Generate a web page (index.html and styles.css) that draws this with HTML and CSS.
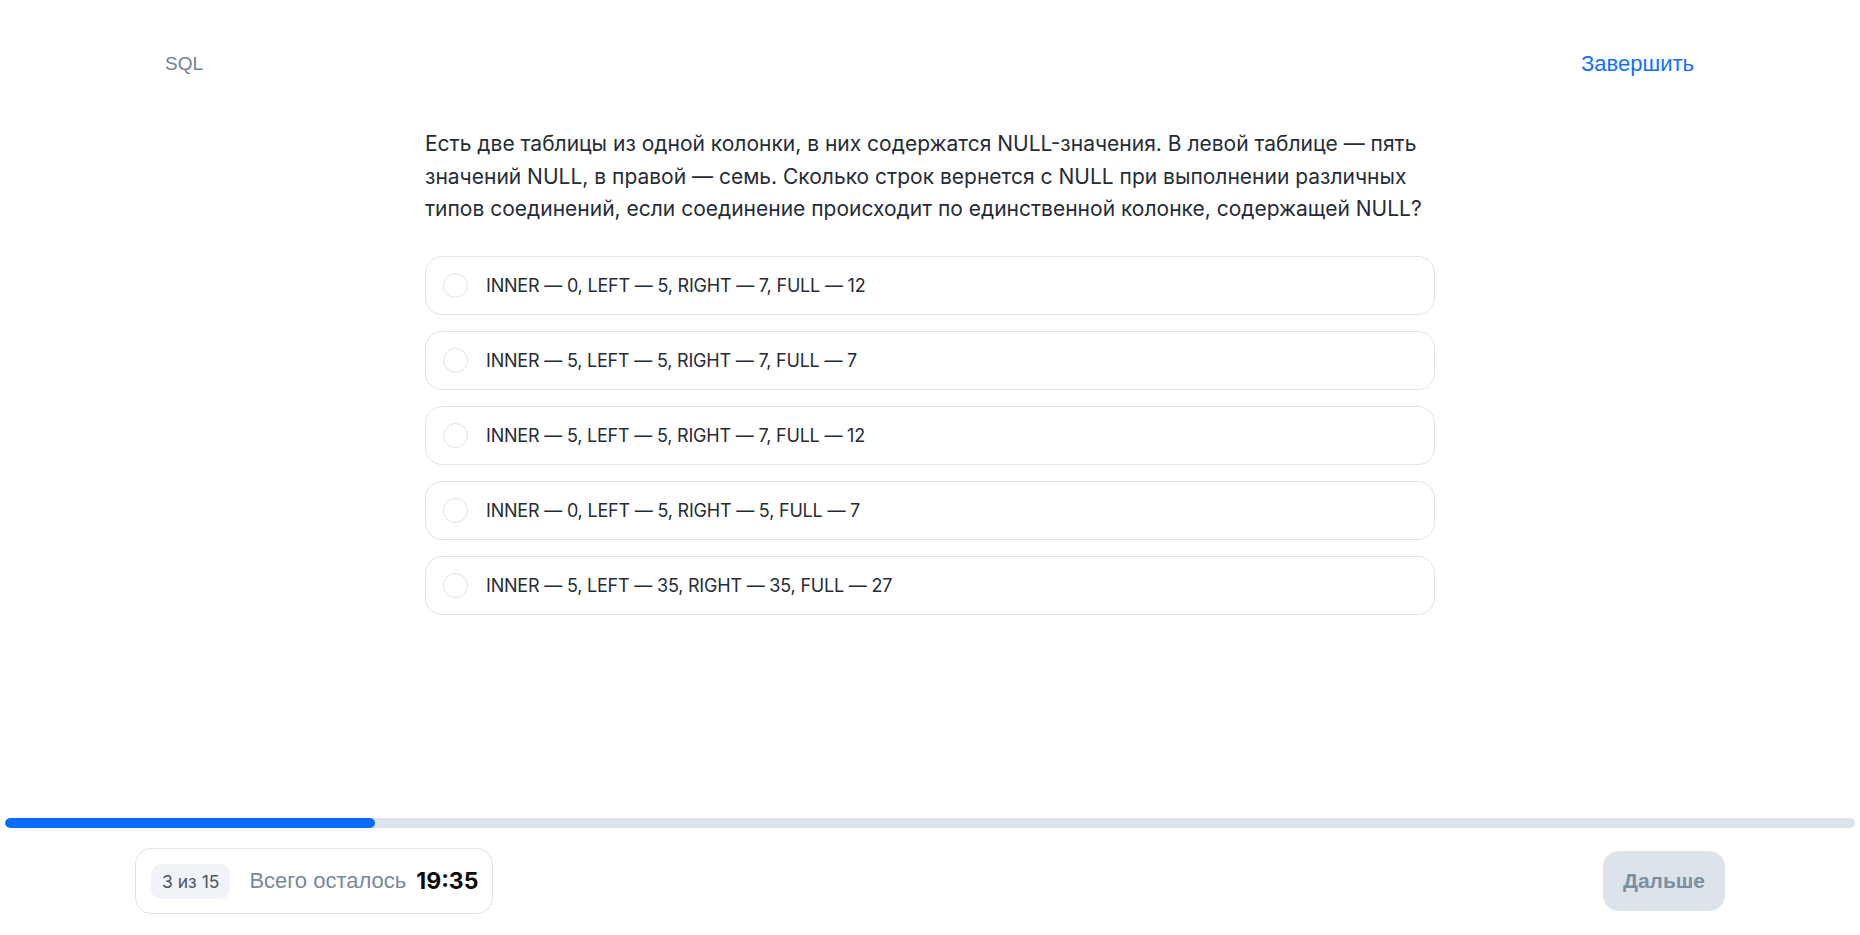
FILE: index.html
```html
<!DOCTYPE html>
<html lang="ru">
<head>
<meta charset="utf-8">
<title>SQL</title>
<link rel="stylesheet" href="styles.css">
</head>
<body>
<div class="page">
  <header class="header">
    <span class="topic">SQL</span>
    <a class="finish" href="#">Завершить</a>
  </header>
  <main class="main">
    <div class="quiz">
      <p class="question">Есть две таблицы из одной колонки, в них содержатся NULL-значения. В левой таблице — пять значений NULL, в правой — семь. Сколько строк вернется с NULL при выполнении различных типов соединений, если соединение происходит по единственной колонке, содержащей NULL?</p>
      <div class="options">
        <label class="option"><span class="radio"></span><span class="opt-text">INNER — 0, LEFT — 5, RIGHT — 7, FULL — 12</span></label>
        <label class="option"><span class="radio"></span><span class="opt-text">INNER — 5, LEFT — 5, RIGHT — 7, FULL — 7</span></label>
        <label class="option"><span class="radio"></span><span class="opt-text">INNER — 5, LEFT — 5, RIGHT — 7, FULL — 12</span></label>
        <label class="option"><span class="radio"></span><span class="opt-text">INNER — 0, LEFT — 5, RIGHT — 5, FULL — 7</span></label>
        <label class="option"><span class="radio"></span><span class="opt-text">INNER — 5, LEFT — 35, RIGHT — 35, FULL — 27</span></label>
      </div>
    </div>
  </main>
  <div class="progress"><div class="progress-fill" style="width: 20%"></div></div>
  <footer class="footer">
    <div class="status">
      <span class="counter">3 из 15</span>
      <span class="remain">Всего осталось</span>
      <span class="timer">19:35</span>
    </div>
    <button class="next" type="button">Дальше</button>
  </footer>
</div>
</body>
</html>
```

FILE: styles.css
```css
* { box-sizing: border-box; }
html, body { margin: 0; padding: 0; background: #fff; }
body { font-family: Inter, "Noto Sans", sans-serif; color: #262c36; }

.page {
  height: 100vh;
  display: flex;
  flex-direction: column;
}

.header {
  display: flex;
  justify-content: space-between;
  align-items: center;
  padding: 44px 166px 0 165px;
  height: 84px;
}
.topic {
  font-family: "Liberation Sans", Arial, sans-serif;
  font-size: 19px;
  color: #6f8296;
}
.finish {
  font-family: "Liberation Sans", Arial, sans-serif;
  font-size: 22px;
  color: #1170ff;
  text-decoration: none;
}

.main {
  flex: 1;
  display: flex;
  justify-content: center;
}
.quiz {
  width: 1010px;
}
.question {
  margin: 44px 0 30px 0;
  font-size: 21px;
  line-height: 32.5px;
  color: #262c36;
}
.options {
  display: flex;
  flex-direction: column;
  gap: 16px;
}
.option {
  display: flex;
  align-items: center;
  gap: 18px;
  height: 59px;
  padding-left: 17px;
  border: 1px solid #dfe4ec;
  border-radius: 17px;
  cursor: pointer;
}
.radio {
  width: 25px;
  height: 25px;
  border: 1.5px solid #dfe4ec;
  border-radius: 50%;
  flex: none;
}
.opt-text {
  font-size: 18px;
  letter-spacing: -0.2px;
  color: #262c36;
}

.progress {
  margin: 0 5px;
  height: 10px;
  border-radius: 5px;
  background: #dde3eb;
  overflow: hidden;
}
.progress-fill {
  height: 100%;
  background: #0a6cff;
  border-radius: 5px;
}

.footer {
  display: flex;
  justify-content: space-between;
  align-items: center;
  padding: 20px 135px 21px 135px;
}
.status {
  display: flex;
  align-items: center;
  height: 66px;
  padding: 0 14px 0 15px;
  border: 1px solid #dfe4ec;
  border-radius: 16px;
}
.counter {
  display: inline-flex;
  align-items: center;
  height: 35px;
  padding: 0 11px;
  border-radius: 10px;
  background: #f0f3f8;
  font-size: 17.5px;
  color: #4f5661;
  margin-right: 19px;
}
.remain {
  font-family: "Liberation Sans", Arial, sans-serif;
  font-size: 22px;
  color: #7a8898;
  margin-right: 10px;
}
.timer {
  font-size: 23px;
  font-weight: 700;
  color: #0a0a0a;
}
.next {
  width: 122px;
  height: 60px;
  border: none;
  border-radius: 16px;
  background: #dce3eb;
  font-family: "Liberation Sans", Arial, sans-serif;
  font-weight: bold;
  font-size: 21px;
  color: #7c8fa1;
  cursor: pointer;
}
```
